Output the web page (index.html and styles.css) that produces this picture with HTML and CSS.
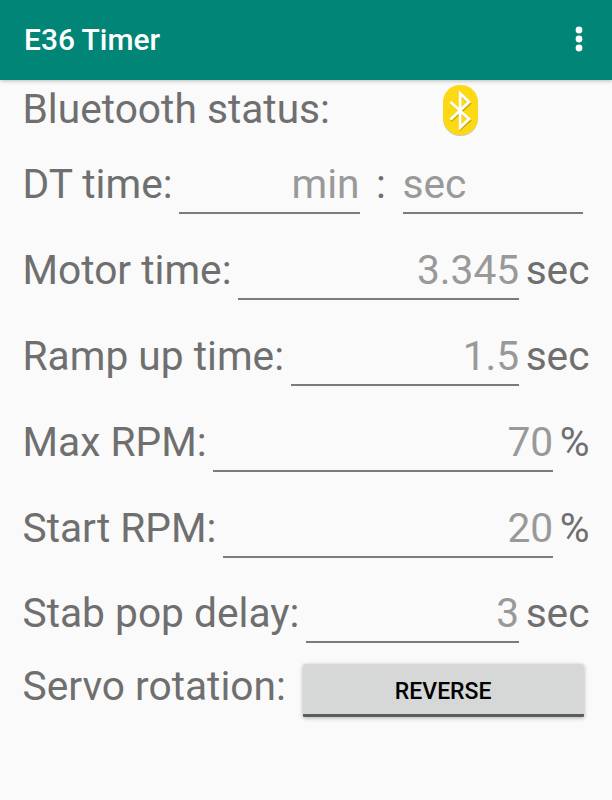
FILE: index.html
```html
<!DOCTYPE html>
<html lang="en">
<head>
  <meta charset="UTF-8">
  <meta name="viewport" content="width=device-width, initial-scale=1.0">
  <title>E36 Timer</title>
  <link rel="stylesheet" href="styles.css">
</head>
<body>
  <header class="app-bar">
    <h1>E36 Timer</h1>
    <svg class="menu-icon" width="8" height="26" viewBox="0 0 8 26" fill="#fff">
      <circle cx="4" cy="4" r="3.4"/>
      <circle cx="4" cy="13" r="3.4"/>
      <circle cx="4" cy="22" r="3.4"/>
    </svg>
  </header>

  <main class="settings">
    <div class="row row-status">
      <span class="label">Bluetooth status:</span>
      <span class="status">
        <svg class="bt-icon" width="35" height="50" viewBox="0 0 35 50" fill="none">
          <rect width="35" height="50" rx="17" fill="#fdd915"/>
          <path d="M8 18L27 35.500L17.500 44V10L27 18.500L8 36" stroke="#c9a800" stroke-width="2.400"/>
          <path d="M7.500 17L26 34L17.200 42.500V8.500L26 17L7.500 34.500" stroke="#fff" stroke-width="2.800"/>
        </svg>
      </span>
    </div>

    <!-- Dethermalizer time -->
    <div class="row">
      <label class="label" for="dt-min">DT time:</label>
      <input class="field" type="text" id="dt-min" placeholder="min">
      <span class="colon">:</span>
      <input class="field field-left" type="text" id="dt-sec" placeholder="sec">
    </div>

    <div class="row">
      <label class="label" for="motor">Motor time:</label>
      <input class="field" type="text" id="motor" placeholder="3.345">
      <span class="unit">sec</span>
    </div>

    <div class="row">
      <label class="label" for="ramp">Ramp up time:</label>
      <input class="field" type="text" id="ramp" placeholder="1.5">
      <span class="unit">sec</span>
    </div>

    <div class="row">
      <label class="label" for="max-rpm">Max RPM:</label>
      <input class="field" type="text" id="max-rpm" placeholder="70">
      <span class="unit">%</span>
    </div>

    <div class="row">
      <label class="label" for="start-rpm">Start RPM:</label>
      <input class="field" type="text" id="start-rpm" placeholder="20">
      <span class="unit">%</span>
    </div>

    <div class="row">
      <label class="label" for="stab">Stab pop delay:</label>
      <input class="field" type="text" id="stab" placeholder="3">
      <span class="unit">sec</span>
    </div>

    <div class="row row-servo">
      <span class="label">Servo rotation:</span>
      <button class="toggle" type="button">REVERSE</button>
    </div>
  </main>
</body>
</html>
```
FILE: styles.css
```css
* {
  box-sizing: border-box;
}
body {
  margin: 0;
  min-height: 100vh;
  background: #fafafa;
  color: #6f6f6f;
  font-family: Roboto, sans-serif;
  font-size: 40.7px;
}
.app-bar {
  display: flex;
  align-items: center;
  justify-content: space-between;
  height: 80px;
  padding: 0 29px 2px 24px;
  background: #008577;
  box-shadow: 0 1px 4px rgba(0, 0, 0, 0.25);
}
.app-bar h1 {
  margin: 0;
  color: #fff;
  font-size: 29.9px;
  font-weight: 500;
}
.menu-icon {
  margin-top: -1px;
}
.settings {
  padding: 0 22.5px;
}
.row {
  display: flex;
  align-items: center;
  height: 85.9px;
  white-space: nowrap;
}
.row-status {
  height: 61px;
  padding-bottom: 3px;
}
.status {
  display: flex;
  flex: 1;
  justify-content: center;
  padding: 1px 0 0 2px;
}
.bt-icon {
  filter: drop-shadow(0 1px 0.5px rgba(0, 0, 0, 0.2));
}
.field {
  flex: 1;
  align-self: flex-start;
  min-width: 0;
  height: 73px;
  margin: 0 6.5px;
  padding: 15px 0 0;
  border: 0;
  border-bottom: 2px solid #7b7b7b;
  border-radius: 0;
  outline: none;
  background: transparent;
  color: #212121;
  font: inherit;
  text-align: right;
}
.field::placeholder {
  color: #999;
  opacity: 1;
}
.field-left {
  text-align: left;
}
.colon {
  width: 30px;
  text-align: center;
}
.row-servo {
  height: 61px;
  align-items: flex-start;
  padding-top: 5.5px;
}
.toggle {
  flex: 1;
  height: 53px;
  margin: 2.5px 6px 0 17px;
  padding: 5px 0 0;
  border: 0;
  border-bottom: 3px solid #5c5c5c;
  border-radius: 3px 3px 1px 1px;
  background: #d6d7d7;
  box-shadow: 0 1px 4px rgba(0, 0, 0, 0.3);
  color: #000;
  font-family: inherit;
  font-size: 23px;
  font-weight: 500;
}
```
